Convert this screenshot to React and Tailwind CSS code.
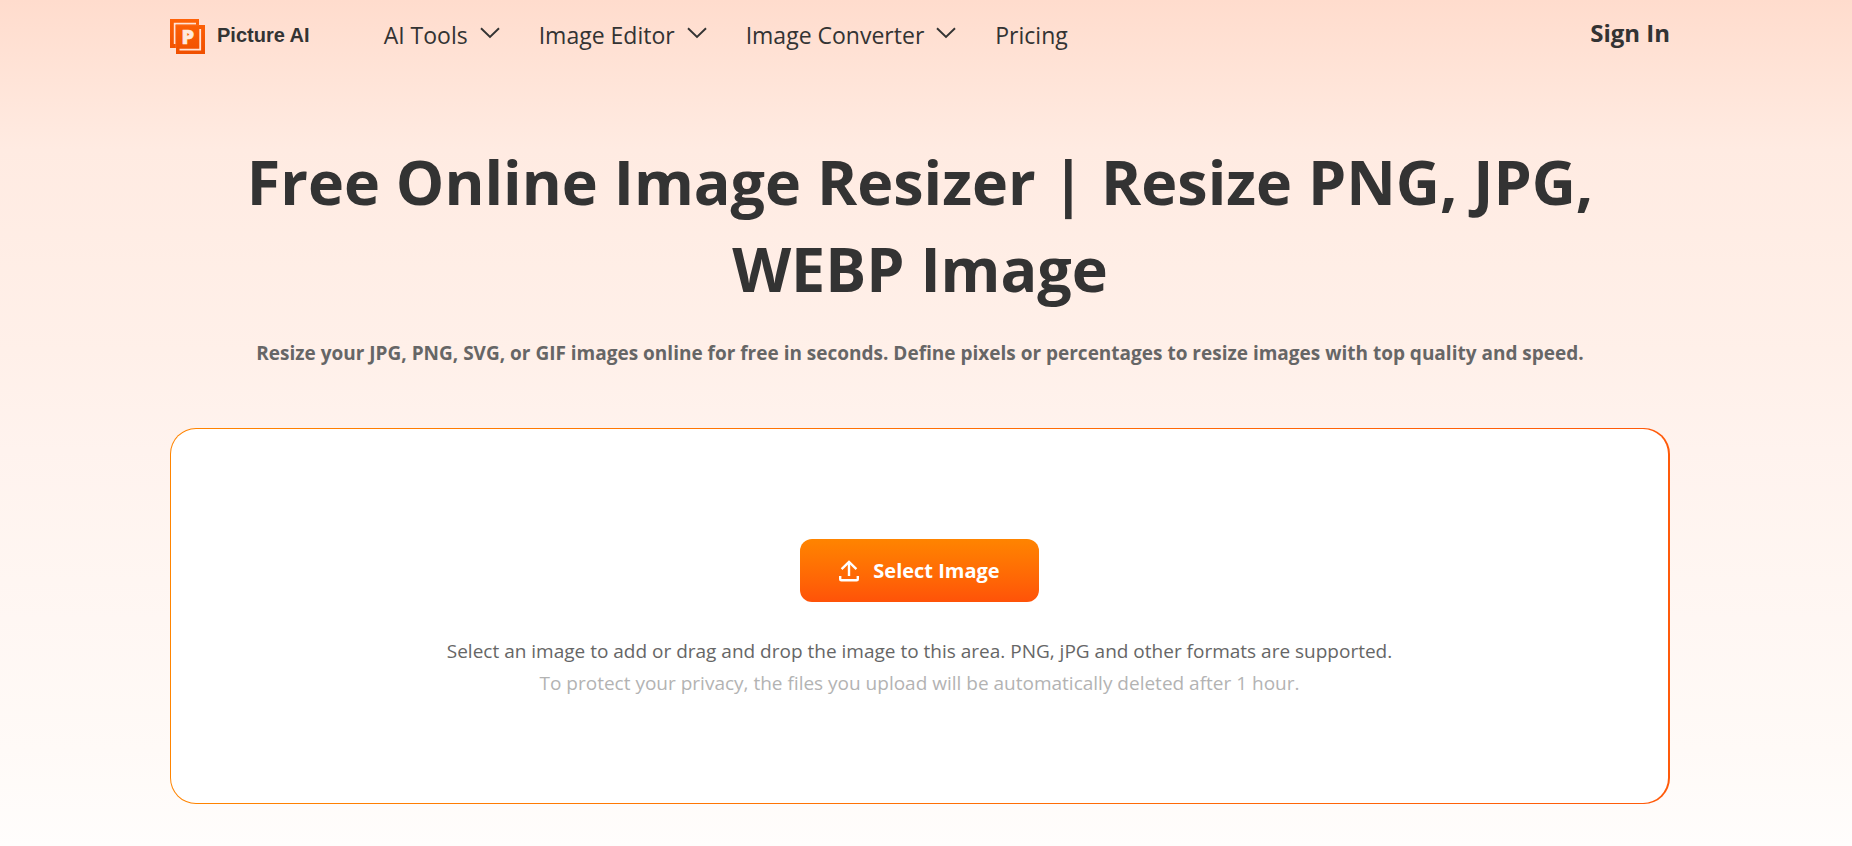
import React from "react";

const navItems = [
  { label: "AI Tools", menu: true },
  { label: "Image Editor", menu: true },
  { label: "Image Converter", menu: true },
  { label: "Pricing", menu: false },
];

const Logo = () => (
  <svg width="35" height="35" viewBox="0 0 35 35" aria-hidden="true">
    <defs>
      <linearGradient id="logoFill" x1="0" y1="0" x2="0" y2="1">
        <stop offset="0" stopColor="#ff6207" />
        <stop offset="1" stopColor="#f05000" />
      </linearGradient>
    </defs>
    <path d="M0 0h29v6h6v29H6v-6H0z" fill="url(#logoFill)" />
    <path d="M4.7 25V4.7H26" fill="none" stroke="#ffe3d6" strokeWidth="1.8" />
    <path d="M30.2 10V30.7H9.5" fill="none" stroke="#ffe3d6" strokeWidth="1.8" />
    <path d="M5.7 29V6h23.3" fill="none" stroke="#ff7a33" strokeWidth="0.5" />
    <text
      x="17.8"
      y="24.8"
      textAnchor="middle"
      fontFamily="Open Sans, sans-serif"
      fontWeight="800"
      fontSize="20"
      fill="#ffe9df"
      stroke="#ffe9df"
      strokeWidth="0.6"
    >
      P
    </text>
  </svg>
);

const Chevron = () => (
  <svg width="20" height="12" viewBox="0 0 20 12" fill="none" className="mb-1" aria-hidden="true">
    <path d="M1 1.2l9 8.8 9-8.8" stroke="#333" strokeWidth="1.9" />
  </svg>
);

const UploadIcon = () => (
  <svg width="20" height="22" viewBox="0 0 20 22" fill="none" stroke="#fff" strokeWidth="2.4" aria-hidden="true">
    <path d="M10 2.2V16" />
    <path d="M2.6 9.2L10 2l7.4 7.2" />
    <path d="M1.2 16v3.2c0 .7.4 1.1 1.1 1.1h15.4c.7 0 1.1-.4 1.1-1.1V16" />
  </svg>
);

const Header = () => (
  <header className="flex h-[72px] items-center justify-between text-[#333]">
    <div className="flex items-center">
      <a href="#home" className="flex items-center gap-3 font-['Liberation_Sans',sans-serif] text-xl font-bold">
        <Logo />
        <span className="pb-0.5">Picture AI</span>
      </a>
      <nav className="ml-[74px] flex items-center gap-[39px] pb-0.5 text-[23px]">
        {navItems.map((item) =>
          item.menu ? (
            <button key={item.label} type="button" className="flex items-center gap-3">
              {item.label}
              <Chevron />
            </button>
          ) : (
            <a key={item.label} href="#pricing">
              {item.label}
            </a>
          )
        )}
      </nav>
    </div>
    <a href="#signin" className="pb-1.5 text-2xl font-bold">
      Sign In
    </a>
  </header>
);

export default function App() {
  return (
    <div className="min-h-screen bg-[linear-gradient(180deg,#ffdccd_0px,#ffe4d8_80px,#ffebe2_150px,#fff0e9_350px,#fff3ee_450px,#fffaf7_750px,#fffdfc_846px)] pr-3 font-['Open_Sans',sans-serif]">
      <div className="mx-auto max-w-[1500px]">
        <Header />

        <main className="text-center">
          <h1 className="px-12 pt-[66px] text-[61px] leading-[87px] font-bold text-[#333]">
            Free Online Image Resizer | Resize PNG, JPG, WEBP Image
          </h1>
          <p className="pt-[26px] text-[19px] leading-[30px] font-bold text-[#666]">
            Resize your JPG, PNG, SVG, or GIF images online for free in seconds. Define pixels or percentages to
            resize images with top quality and speed.
          </p>

          {/* Drop area */}
          <section className="mt-[60px] rounded-[26px] bg-linear-to-r from-[#ff8400] to-[#ff5a0a] py-px pr-0.5 pl-px">
            <div className="flex flex-col items-center rounded-[25px] bg-white pt-[110px] pb-[104px]">
              <button
                type="button"
                className="flex h-[63px] items-center gap-3.5 rounded-xl bg-linear-to-b from-[#ff8400] to-[#ff5208] px-[39px] text-xl font-bold text-white"
              >
                <UploadIcon />
                Select Image
              </button>
              <p className="mt-[33px] text-[19px] leading-8 text-[#666]">
                Select an image to add or drag and drop the image to this area. PNG, jPG and other formats are
                supported.
              </p>
              <p className="text-[19px] leading-8 text-[#b3b3b3]">
                To protect your privacy, the files you upload will be automatically deleted after 1 hour.
              </p>
            </div>
          </section>
        </main>
      </div>
    </div>
  );
}
